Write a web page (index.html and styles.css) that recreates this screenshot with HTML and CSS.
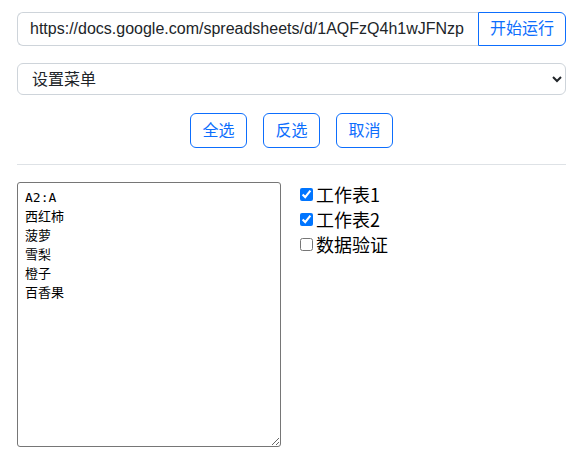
FILE: index.html
```html
<!DOCTYPE html>
<html lang="zh">
<head>
<meta charset="utf-8">
<link rel="stylesheet" href="styles.css">
</head>
<body>
<div class="page">
  <div class="input-group">
    <input class="url-input" type="text" value="https://docs.google.com/spreadsheets/d/1AQFzQ4h1wJFNzp">
    <button class="btn btn-run">开始运行</button>
  </div>
  <select class="menu-select">
    <option>设置菜单</option>
  </select>
  <div class="btn-row">
    <button class="btn">全选</button>
    <button class="btn">反选</button>
    <button class="btn">取消</button>
  </div>
  <hr class="divider">
  <div class="main">
    <textarea class="ranges">A2:A
西红柿
菠萝
雪梨
橙子
百香果</textarea>
    <div class="sheets">
      <label class="sheet"><input type="checkbox" checked>工作表1</label>
      <label class="sheet"><input type="checkbox" checked>工作表2</label>
      <label class="sheet"><input type="checkbox">数据验证</label>
    </div>
  </div>
</div>
</body>
</html>
```
FILE: styles.css
```css
* { box-sizing: border-box; }
body {
  margin: 0;
  font-family: "Liberation Sans", "Noto Sans CJK SC", sans-serif;
  color: #212529;
  background: #fff;
}
.page {
  padding: 12px 14px 0 17px;
}
.input-group {
  display: flex;
  height: 34px;
}
.url-input {
  flex: 1;
  min-width: 0;
  height: 34px;
  border: 1px solid #ced4da;
  border-right: none;
  border-radius: 6px 0 0 6px;
  padding: 0 12px;
  font-family: "Liberation Sans", "Noto Sans CJK SC", sans-serif;
  font-size: 16px;
  color: #212529;
  outline: none;
}
.btn {
  font-family: "Liberation Sans", "Noto Sans CJK SC", sans-serif;
  font-size: 16px;
  color: #0d6efd;
  background: #fff;
  border: 1px solid #0d6efd;
  border-radius: 6px;
  height: 35px;
  width: 57px;
  padding: 0;
  line-height: 1;
  cursor: pointer;
}
.btn-run {
  width: 88px;
  height: 34px;
  border-radius: 0 6px 6px 0;
}
.menu-select {
  display: block;
  width: 100%;
  height: 32px;
  margin-top: 17px;
  border: 1px solid #ced4da;
  border-radius: 6px;
  background: #fff;
  padding: 0 10px;
  font-family: "Liberation Sans", "Noto Sans CJK SC", sans-serif;
  font-size: 16px;
  color: #212529;
}
.btn-row {
  display: flex;
  justify-content: center;
  gap: 16px;
  margin-top: 18px;
}
.divider {
  margin: 16px 0 0 0;
  border: none;
  border-top: 1px solid #dee2e6;
  height: 0;
}
.main {
  display: flex;
  align-items: flex-start;
  gap: 19px;
  margin-top: 17px;
}
.ranges {
  width: 264px;
  height: 265px;
  border: 1px solid #767676;
  border-radius: 3px;
  padding: 5px 7px;
  font-family: "DejaVu Sans Mono", "Noto Sans CJK SC", monospace;
  font-size: 13px;
  line-height: 19px;
  color: #000;
  resize: both;
}
.sheets {
  display: flex;
  flex-direction: column;
  padding-top: 0;
}
.sheet {
  display: flex;
  align-items: center;
  font-size: 18px;
  line-height: 25px;
  color: #000;
  font-family: "Noto Sans CJK SC", "Liberation Sans", sans-serif;
}
.sheet input {
  width: 13px;
  height: 13px;
  margin: 0 3px 0 0;
  accent-color: #0075ff;
}
```
